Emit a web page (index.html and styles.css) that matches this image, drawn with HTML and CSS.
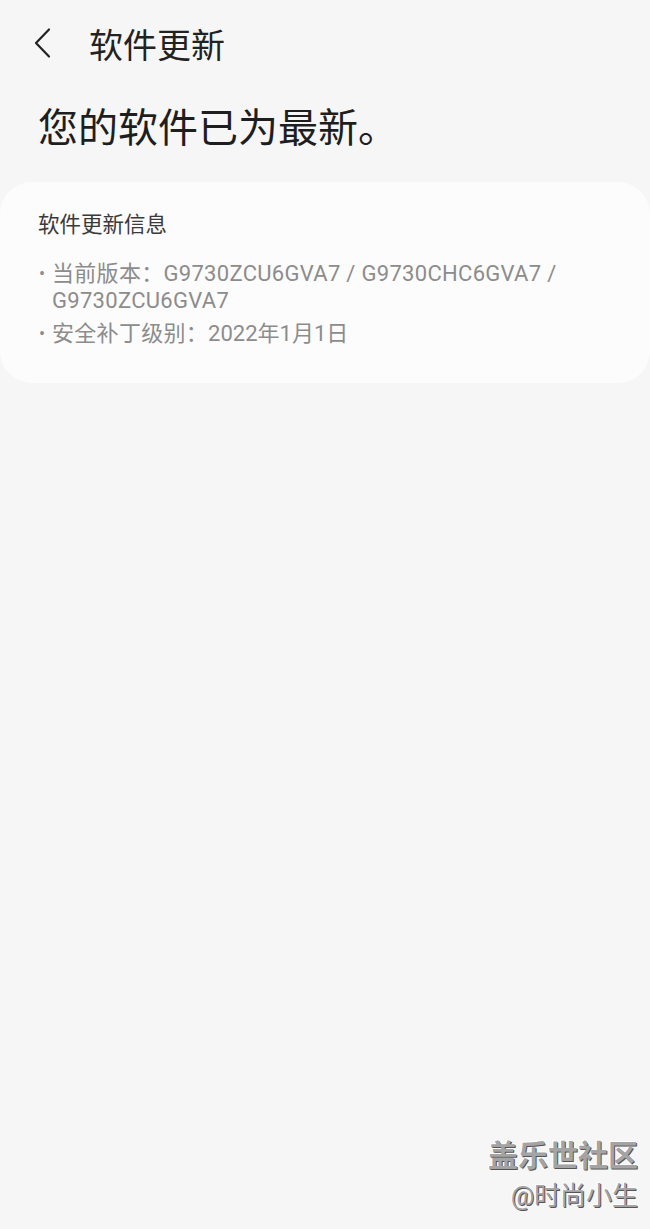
FILE: index.html
```html
<!DOCTYPE html>
<html lang="zh">
<head>
<meta charset="utf-8">
<link rel="stylesheet" href="styles.css">
</head>
<body>
<div class="page">
  <header class="topbar">
    <svg class="back" width="22" height="32" viewBox="0 0 22 32"><path d="M18 2.5 L5 16 L18 29.5" fill="none" stroke="#222" stroke-width="2.2" stroke-linecap="round" stroke-linejoin="round"/></svg>
    <span class="title">软件更新</span>
  </header>
  <h1 class="headline">您的软件已为最新。</h1>
  <section class="card">
    <div class="card-title">软件更新信息</div>
    <ul class="info">
      <li><span class="dot">•</span><span class="txt">当前版本：G9730ZCU6GVA7 / G9730CHC6GVA7 / G9730ZCU6GVA7</span></li>
      <li><span class="dot">•</span><span class="txt">安全补丁级别：<span class="date">2022年1月1日</span></span></li>
    </ul>
  </section>
  <div class="spacer"></div>
  <div class="watermark">
    <div class="wm1">盖乐世社区</div>
    <div class="wm2">@时尚小生</div>
  </div>
</div>
</body>
</html>
```
FILE: styles.css
```css
html, body {
  margin: 0;
  padding: 0;
  background: #f6f6f6;
}
body {
  font-family: Roboto, "Noto Sans CJK SC", sans-serif;
  color: #1e1e1e;
}
.page {
  width: 650px;
  height: 1229px;
  display: flex;
  flex-direction: column;
  overflow: hidden;
}
.topbar {
  height: 90px;
  display: flex;
  align-items: center;
  padding-left: 31px;
  box-sizing: border-box;
  padding-bottom: 4px;
}
.back {
  display: block;
}
.title {
  margin-left: 36px;
  font-size: 34px;
  color: #222;
}
.headline {
  margin: 0;
  padding: 11px 0 0 38px;
  height: 81px;
  box-sizing: border-box;
  font-size: 40px;
  font-weight: 400;
  line-height: 56px;
  color: #1e1e1e;
}
.card {
  margin-top: 11px;
  background: #fcfcfc;
  border-radius: 32px;
  height: 201px;
  box-sizing: border-box;
  padding: 28px 38px 0 38px;
}
.card-title {
  font-size: 21.5px;
  line-height: 30px;
  color: #3a3a3a;
}
.info {
  list-style: none;
  margin: 20px 0 0 0;
  padding: 0;
  color: #8c8c8c;
  font-size: 22px;
  line-height: 27px;
}
.info li {
  display: flex;
  margin-bottom: 6px;
}
.info .dot {
  width: 14px;
  flex: none;
  font-size: 18px;
  padding-left: 1px;
  box-sizing: border-box;
}
.info .txt {
  width: 540px;
  letter-spacing: 0.3px;
}
.info .date {
  letter-spacing: 0;
}
.spacer {
  flex: 1;
}
.watermark {
  align-self: flex-end;
  text-align: right;
  padding-right: 12px;
  padding-bottom: 15px;
  color: #a4a4a4;
  text-shadow: 1px 1px 0 #555, -1px -1px 0 #fff;
}
.wm1 {
  font-size: 30px;
  font-weight: 700;
  line-height: 40px;
}
.wm2 {
  font-size: 26px;
  line-height: 36px;
  margin-top: 2px;
}
```
